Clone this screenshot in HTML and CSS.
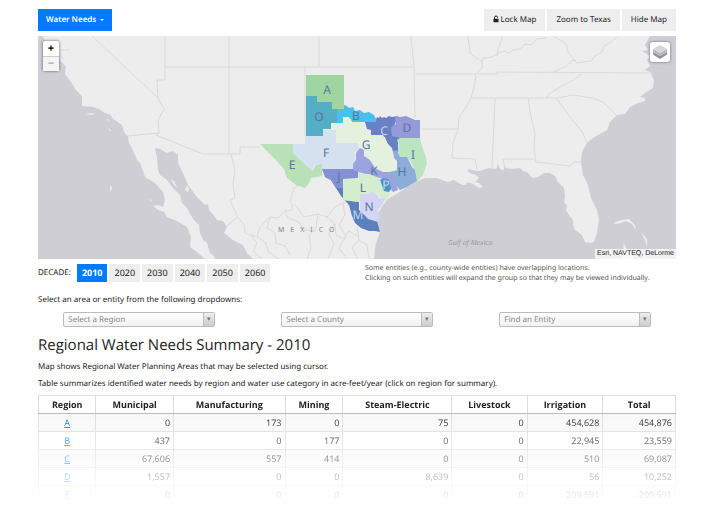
FILE: index.html
```html
<!DOCTYPE html>
<html lang="en">
<head>
<meta charset="utf-8">
<title>Regional Water Needs</title>
<link rel="stylesheet" href="styles.css">
</head>
<body>
<main class="page">
  <header class="toolbar">
    <button class="btn btn-primary" type="button">Water Needs <span class="caret"></span></button>
    <div class="toolbar-actions">
      <button class="btn" type="button"><svg class="lock" viewBox="0 0 12 14" aria-hidden="true"><path d="M3 7V4a3 3 0 0 1 6 0v1" fill="none" stroke="currentColor" stroke-width="2"/><rect x="1" y="6.500" width="10" height="7" rx="1" fill="currentColor"/></svg>Lock Map</button>
      <button class="btn" type="button">Zoom to Texas</button>
      <button class="btn" type="button">Hide Map</button>
    </div>
  </header>

  <section class="map" aria-label="Map of Texas water planning regions">
    <svg class="map-canvas" viewBox="38 36 638 223">
      <rect class="sea" x="38" y="36" width="638" height="223"/>
      <path class="land" d="M42 36L46 42 54 45 59 53 60 60 66 67 65 74 71 82 76 90 82 96 82 106 93 107 99 109 105 113 111 115 113 119 122 125 124 132 128 137 129 143 133 150 137 160 140 163 143 171 145 177 155 183 163 192 165 200 163 207 158 205 153 206 158 210 164 212 167 217 177 221 187 227 191 237 190 247 197 252 205 259H215L214 256 210 253 207 243 203 240 200 233 199 225 193 219 187 208 182 203 180 195 173 188 167 180 160 175 158 170 157 157 155 148 160 149 167 153 173 151 178 155 178 163 183 173 188 185 197 197 205 205 208 204 209 210 212 213 217 220 223 221 227 227 224 233 233 240 243 245 247 253 253 259H374L375 249 376 243 380 232 378 222 378 213 383 205 388 199 398 193 407 187 416 182 425 178 437 178 447 182 454 180 462 185 466 185 467 182 473 184 479 188 483 187 479 183 475 182 479 178 476 175 470 173 467 171 469 169 476 171 480 171 489 168 496 169 498 164 500 169 504 170 504 165 506 168 512 169 520 168 523 171 527 172 532 178 538 177 544 173 550 173 555 176 558 182 564 188 565 196 564 202 567 206 566 210 569 215 573 220 573 225 575 230 582 235 585 242 590 243 594 242 597 233 599 220 597 210 591 198 588 185 583 175 581 163 582 152 587 143 593 138 607 130 610 122 617 115 625 114 630 107 638 103 645 101 645 98 640 97 645 93 653 88 654 80 650 72 645 70 650 66 647 60 650 56 642 51 648 50 645 45 650 36Z"/>
      <g class="land">
        <path d="M86 114l5-1 4 1-5 1zM107 119l3 1-2 1zM107 127l4 3v2zM171 180l3 1 3 6-3-2zM187 185l2 3-1 4-3-2zM110 186l2 1-1 4-1-1zM150 198l2 4-2-1zM613 223l9-3 7-1 6 6 1 5-4-6-6-3-9 3zM622 259l2-16 3 7 6 4v5zM641 232l6 7v8l-2-7z"/>
      </g>
      <g class="borders">
        <path d="M92 36L158 98 164 109 158 120 159 133 156 135M127 136L159 133M165 36V80L157 80 158 98M165 67H414M229 36V154M319 36V67M156 135L203 154H240V147H260M305 67V136M411 36L414 67 415 118"/>
        <path d="M415 74H476L475 83 471 98 466 107 459 117 458 130 453 143 452 158 475 159 477 170M421 129H458M468 36L470 53 482 62 482 68 476 74M478 74H497V72L653 73M471 98H558L573 95 592 98 603 102 617 116M581 74L575 79 564 85 550 93 546 98M495 98L492 168M528 98L531 117 535 133 534 148 536 162 570 166 573 162 581 162M503 159H535M503 159l2 9M557 99L570 117 583 133 587 143"/>
        <path d="M482 62l1-4 9-1 3-2 8-4 7 2 3-3 7-1 5-5 6 1 6-6 9-1M503 36l-5 14-1 6M553 36l9 5 5 4 0 5 5 7 5 6 6-1 8-1 4-5 7-4 2-6 7-4 6-5M553 72l12-5 8-7 3 1M38 36l14 14h18M59 52l4 7"/>
        <path d="M231 154l4 17-2 12 2 15-5 2 8 17-4 3-8 7M238 217l6 8 1 8 12 4 3-10 10-10 8 1 7-7 7-1 0-6-2-2 4-14 10-7M295 205l9 12 14-3 9 3 8-10 10-5M318 214l-2 14-7 8 2 12-4 11M250 234l7 9-4 8 9 8M257 237l8 5 4 10 10 7M270 218l-3 10 8 5 1 10 9 3 5 9M285 211l3 7 11 4 5 8 12 1M327 217l8 7 1 11 7 4 6-8 8 5M343 203l2 12-6 10 7 11-7 12 8 11M357 227l2 13-7 8 6 11M334 224l-5 10 5 10-6 15M359 240l8 5 2 14"/>
      </g>
      <g class="regions">
        <path fill="#9fd5a0" d="M306 75h38v34h-12v-7h-15v-6h-11z"/>
        <path fill="#55adc6" d="M306 96h11v6h15v7h5v14h-6v6h-8v7h-17z"/>
        <path fill="#4cbfea" d="M337 109h7v-4l3 1 2 2 4-1 2 4 5-1 4 3 5-1 5 3 2 4-1 4h-10l-8 1-5-1-1-4h-6v6h-8z"/>
        <path fill="#6a80c6" d="M365 122h10l2-5 2 1 1-2 2 2 2-1 2 1 3-2 3 1 6-1-3 8-2 3 1 9 8 2-4 4 0 10-2 4-3-4-1-4-5-5-2-6-14-1v-6l-4-1z"/>
        <path fill="#949bd8" d="M395 116l5 1 6-1 9 4h5v18l-18 1-5-2-5-1-1-9 5-3z"/>
        <path fill="#bbe4c1" d="M400 138h20l2 8 4 11 1 6-4 12-6 6-2-11-5-10-10-3-2-6 1-6-2-5z"/>
        <path fill="#8cadd9" d="M393 151l4-1 3 7 7 0 5 10 3 3 2 11-10 6-7 3-4-5-2-6-6-7 9-2v-9l-3-3z"/>
        <path fill="#e3f1de" d="M331 123h12l0-6h6l3 5 13 0v7l5 6h13l5 9 1 5 4 7-1 5 5 9-8 2-7-1-7-4-5-7-5-4v-6l-7-4v-3h-22v-13h-5z"/>
        <path fill="#d6e1f0" d="M293 144h12v-8h18v-6h13v13h22l1 6-4 3 0 8-2 9h-31v-5l-7 1-4 6-19-18z"/>
        <path fill="#b9e1b8" d="M260 144h33l0 9 19 18 4-6 6-1v12l-11 2-2 5-4 5-9-3-9-7-3-9-9-10z"/>
        <path fill="#8391d2" d="M322 169h36v9l-15 1v9h-6l-6-8-6-3z"/>
        <path fill="#5a80be" d="M331 180h12v20l16 2v8l9 8 9 2 3 12-5-1-6 0-8-3-6-5-3-7-3-11-8-9z"/>
        <path fill="#8391d2" d="M325 177h18v11h-7l-5-8z"/>
        <path fill="#9ba3e0" d="M360 148l4 2v6l6 4 5 8 8 4h6l7 9 2 9-5 2-4-5-1-7-8-2-10-3-12-3-5-2v-6l3-4v-7z"/>
        <path fill="#d4edce" d="M343 179h15v-7l4 2 8 0 10 5 3 7 7 7-2 5-5 4-5-9-18 1v8l-17-2z"/>
        <path fill="#4b96c8" d="M380 180l3-2 5 1 2 4 1 6-2 3-5-1z"/>
        <path fill="#d4d5f5" d="M360 194h7l5-2 6 3 1 3 6 1-3 6-4 5 1 6-1 6-10-3-8-9z"/>
      </g>
      <g class="region-labels">
        <text x="327" y="94">A</text><text x="319" y="121">O</text><text x="356" y="120">B</text>
        <text class="pale" x="384" y="135">C</text><text x="407" y="132">D</text><text x="366" y="149">G</text>
        <text x="326" y="157">F</text><text x="413" y="159">I</text><text x="292" y="169">E</text>
        <text x="402" y="176">H</text><text x="374" y="175">K</text><text x="339" y="181">J</text>
        <text x="363" y="192">L</text><text class="pale" x="386" y="189">P</text>
        <text x="369" y="211">N</text><text class="pale" x="358" y="219">M</text>
      </g>
      <text class="country" x="278" y="232">MEXICO</text>
      <text class="gulf" x="448" y="245">Gulf of Mexico</text>
    </svg>
    <div class="zoom-control">
      <button type="button" aria-label="Zoom in">+</button>
      <button type="button" aria-label="Zoom out" disabled>−</button>
    </div>
    <button class="layers" type="button" aria-label="Layers">
      <svg viewBox="0 0 16 16"><path d="M1 10.500l7 4.500 7-4.500V8l-7 4-7-4z" fill="#929292"/><path d="M1 7.500l7 4.500 7-4.500V5l-7 4-7-4z" fill="#b4b4b4"/><path d="M1 5l7-4 7 4-7 4z" fill="#d6d6d6"/></svg>
    </button>
    <div class="attribution">Esri, NAVTEQ, DeLorme</div>
  </section>

  <section class="under-map">
    <div class="decades">
      <span class="decade-label">DECADE:</span>
      <button class="decade active" type="button">2010</button>
      <button class="decade" type="button">2020</button>
      <button class="decade" type="button">2030</button>
      <button class="decade" type="button">2040</button>
      <button class="decade" type="button">2050</button>
      <button class="decade" type="button">2060</button>
    </div>
    <p class="note">Some entities (e.g., county-wide entities) have overlapping locations.<br>Clicking on such entities will expand the group so that they may be viewed individually.</p>
  </section>

  <p class="prompt">Select an area or entity from the following dropdowns:</p>
  <form class="pickers">
    <div class="picker"><select aria-label="Region"><option>Select a Region</option></select></div>
    <div class="picker"><select aria-label="County"><option>Select a County</option></select></div>
    <div class="picker"><select aria-label="Entity"><option>Find an Entity</option></select></div>
  </form>

  <h1>Regional Water Needs Summary - 2010</h1>
  <p class="intro">Map shows Regional Water Planning Areas that may be selected using cursor.</p>
  <p class="intro">Table summarizes identified water needs by region and water use category in acre-feet/year (click on region for summary).</p>

  <table class="summary">
    <colgroup><col class="c-region"><col class="c-municipal"><col class="c-manufacturing"><col class="c-mining"><col class="c-steam"><col class="c-livestock"><col class="c-irrigation"><col class="c-total"></colgroup>
    <thead>
      <tr><th>Region</th><th>Municipal</th><th>Manufacturing</th><th>Mining</th><th>Steam-Electric</th><th>Livestock</th><th>Irrigation</th><th>Total</th></tr>
    </thead>
    <tbody>
      <tr><td><a href="#A">A</a></td><td>0</td><td>173</td><td>0</td><td>75</td><td>0</td><td>454,628</td><td>454,876</td></tr>
      <tr><td><a href="#B">B</a></td><td>437</td><td>0</td><td>177</td><td>0</td><td>0</td><td>22,945</td><td>23,559</td></tr>
      <tr><td><a href="#C">C</a></td><td>67,606</td><td>557</td><td>414</td><td>0</td><td>0</td><td>510</td><td>69,087</td></tr>
      <tr><td><a href="#D">D</a></td><td>1,557</td><td>0</td><td>0</td><td>8,639</td><td>0</td><td>56</td><td>10,252</td></tr>
      <tr><td><a href="#E">E</a></td><td>0</td><td>0</td><td>0</td><td>0</td><td>0</td><td>209,591</td><td>209,591</td></tr>
    </tbody>
  </table>
</main>
</body>
</html>
```

FILE: styles.css
```css
* { box-sizing: border-box; }

body {
  margin: 0;
  background: #fff;
  color: #222;
  font-family: "Noto Sans", "Open Sans", sans-serif;
  font-size: 8px;
  line-height: 12px;
  text-rendering: geometricPrecision;
}

button, select { font: inherit; color: inherit; text-rendering: inherit; }
p { margin: 0; }

.page { padding: 9px 48px 16px 38px; }

.toolbar { display: flex; justify-content: space-between; margin-bottom: 5px; }
.toolbar-actions { display: flex; gap: 2px; }

.btn {
  height: 22px;
  padding: 0 9px;
  border: 0;
  background: #eee;
  color: #222;
  white-space: nowrap;
}
.btn-primary { padding: 0 8px; background: #007bff; color: #fff; font-weight: 600; }
.caret {
  display: inline-block;
  margin-left: 2px;
  vertical-align: middle;
  border: 2px solid transparent;
  border-top-color: currentColor;
  border-bottom: 0;
}
.lock { width: 6px; height: 8px; margin-right: 2px; vertical-align: -1px; }

.map { position: relative; }
.map-canvas { display: block; width: 100%; height: auto; }
.sea { fill: #cfced5; }
.land { fill: #ededed; }
.borders path { fill: none; stroke: #dadada; stroke-width: 1; stroke-linejoin: round; }
.region-labels text { fill: #55779f; font-size: 12px; text-anchor: middle; }
.region-labels .pale { fill: #c4d8ee; }
.country { fill: #888; font-size: 7px; letter-spacing: 6px; }
.gulf { fill: #9a9a9f; font-size: 7px; font-style: italic; }

.zoom-control {
  position: absolute;
  top: 5px;
  left: 5px;
  width: 16px;
  border-radius: 2px;
  background: #fff;
  box-shadow: 0 0 3px rgba(0, 0, 0, .6);
}
.zoom-control button {
  display: block;
  width: 100%;
  height: 15px;
  padding: 0;
  border: 0;
  background: none;
  color: #000;
  font-weight: 700;
  font-size: 11px;
  line-height: 14px;
}
.zoom-control button + button { border-top: 1px solid #ccc; background: #f4f4f4; color: #aaa; }

.layers {
  position: absolute;
  top: 6px;
  right: 6px;
  width: 20px;
  height: 20px;
  padding: 2px;
  border: 0;
  border-radius: 3px;
  background: #fff;
  box-shadow: 0 0 3px rgba(0, 0, 0, .5);
}
.layers svg { display: block; width: 16px; height: 16px; }

.attribution {
  position: absolute;
  right: 0;
  bottom: 0;
  padding: 0 2px;
  background: rgba(255, 255, 255, .7);
  font-family: "Liberation Sans", sans-serif;
  font-size: 7px;
  line-height: 10px;
}

.under-map {
  display: grid;
  grid-template-columns: 1fr 1fr;
  gap: 16px;
  margin-top: 5px;
}
.decades { display: flex; gap: 2px; }
.decade-label { margin-right: 4px; line-height: 17px; }
.decade { height: 18px; padding: 0 5px; border: 0; background: #eee; color: #222; font-size: 9px; }
.decade.active { background: #007bff; color: #fff; font-weight: 700; }
.note { color: #555; font-size: 7px; line-height: 10px; white-space: nowrap; }

.prompt { margin-top: 10px; }

.pickers {
  display: grid;
  grid-template-columns: repeat(3, 1fr);
  gap: 16px;
  margin-top: 6px;
}
.picker { position: relative; width: 75%; margin: 0 auto; }
.picker select {
  display: block;
  width: 100%;
  height: 15px;
  padding: 0 14px 0 4px;
  border: 1px solid #bbb;
  border-radius: 2px;
  appearance: none;
  background: linear-gradient(#fff, #f1f1f1);
  color: #888;
}
.picker::after {
  content: "▾";
  position: absolute;
  top: 1px;
  right: 1px;
  bottom: 1px;
  width: 10px;
  border-left: 1px solid #bbb;
  background: linear-gradient(#eee, #ccc);
  color: #777;
  font-family: "DejaVu Sans", sans-serif;
  font-size: 7px;
  line-height: 13px;
  text-align: center;
  pointer-events: none;
}

h1 {
  margin: 7px 0 5px;
  font-family: "Open Sans", "Noto Sans", sans-serif;
  font-size: 15px;
  font-weight: 400;
  line-height: 22px;
}
.intro { margin-bottom: 5px; }

.summary {
  width: 100%;
  border-collapse: collapse;
  table-layout: fixed;
  font-family: "Open Sans", "Noto Sans", sans-serif;
  font-size: 9px;
  -webkit-mask-image: linear-gradient(#000 18px, transparent 110px);
  mask-image: linear-gradient(#000 18px, transparent 110px);
}
.c-region { width: 9%; }
.c-municipal { width: 12.2%; }
.c-manufacturing { width: 17.5%; }
.c-mining { width: 9.1%; }
.c-steam { width: 17.1%; }
.c-livestock { width: 11.8%; }
.c-irrigation { width: 11.9%; }
.c-total { width: 11.4%; }
.summary th, .summary td { height: 18px; padding: 0 3px; border: 1px solid #ddd; text-align: right; }
.summary th { border-bottom-color: #bbb; font-weight: 700; text-align: center; }
.summary td:first-child { text-align: center; }
.summary tbody tr:nth-child(odd) { background: #f8f8f8; }
.summary a { color: #007bff; }
```
